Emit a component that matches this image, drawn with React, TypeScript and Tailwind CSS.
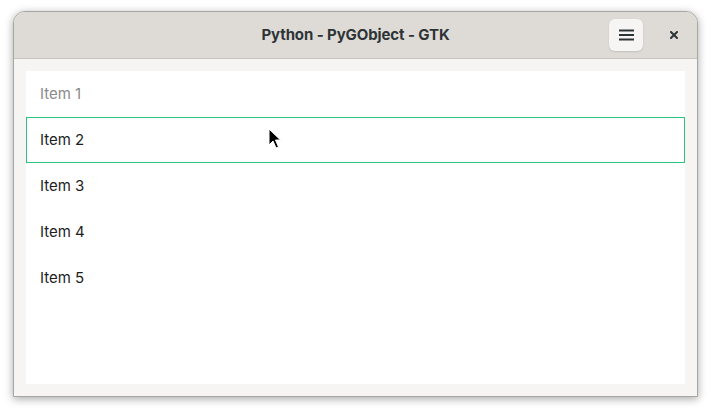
import React from "react";

export default function App() {
  const items = ["Item 1", "Item 2", "Item 3", "Item 4", "Item 5"];
  return (
    <div className="relative w-[711px] h-[413px] bg-white overflow-hidden" style={{ fontFamily: "Inter, 'Noto Sans', sans-serif" }}>
      <div className="pt-[11px] pl-[13px]">
        <div className="w-[685px] h-[386px] flex flex-col rounded-t-[12px] border border-[#a8a6a3] bg-[#f6f5f4] shadow-[0_2px_8px_rgba(0,0,0,0.35)] overflow-hidden">
          <div className="h-[47px] shrink-0 flex items-center bg-[#dedbd7] border-b border-[#c8c5c1] relative">
            <div className="flex-1 text-center text-[15px] font-bold text-[#2e3436] tracking-[-0.1px]">Python - PyGObject - GTK</div>
            <div className="absolute left-[595px] top-[7px] w-[34px] h-[32px] rounded-[6px] bg-[#f6f5f4] shadow-[0_1px_2px_rgba(0,0,0,0.12)] flex items-center justify-center">
              <svg width="15" height="12" viewBox="0 0 15 12">
                <rect x="0" y="0.5" width="15" height="2" fill="#2e3436" />
                <rect x="0" y="5" width="15" height="2" fill="#2e3436" />
                <rect x="0" y="9.5" width="15" height="2" fill="#2e3436" />
              </svg>
            </div>
            <div className="absolute left-[656px] top-[19px] w-[8px] h-[8px] flex items-center justify-center">
              <svg width="8" height="8" viewBox="0 0 8 8">
                <path d="M1 1 L7 7 M7 1 L1 7" stroke="#2e3436" strokeWidth="2" strokeLinecap="square" />
              </svg>
            </div>
          </div>
          <div className="flex-1 px-[12px] pt-[12px] pb-[12px]">
            <div className="h-full bg-white flex flex-col">
              {items.map((t, i) => (
                <div
                  key={t}
                  className={
                    i === 1
                      ? "h-[46px] flex items-center pl-[13px] text-[15px] border border-[#2ec27e] text-[#1e1e1e]"
                      : i === 0
                      ? "h-[46px] flex items-center pl-[14px] text-[15px] text-[#8a8a8a]"
                      : "h-[46px] flex items-center pl-[14px] text-[15px] text-[#1e1e1e]"
                  }
                >
                  {t}
                </div>
              ))}
            </div>
          </div>
        </div>
      </div>
      <svg className="absolute left-[268px] top-[128px]" width="14" height="22" viewBox="0 0 14 22">
        <path d="M1 1 L1 17 L5 13 L8 20 L10.5 19 L7.5 12 L12.5 12 Z" fill="#000" stroke="#fff" strokeWidth="1" />
      </svg>
    </div>
  );
}
